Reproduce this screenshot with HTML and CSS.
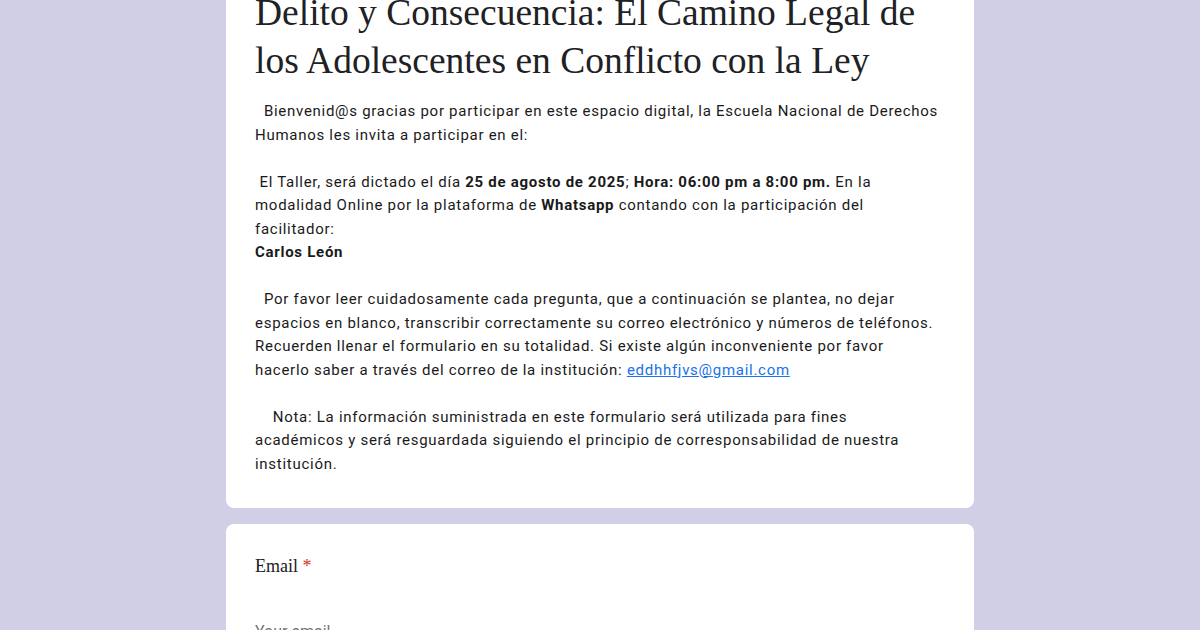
FILE: index.html
```html
<!DOCTYPE html>
<html lang="es">
<head>
<meta charset="utf-8">
<title>Delito y Consecuencia</title>
<link rel="stylesheet" href="styles.css">
</head>
<body>
<main class="page">
  <section class="card header-card">
    <h1 class="title">Delito y Consecuencia: El Camino Legal de los Adolescentes en Conflicto con la Ley</h1>
    <div class="desc">  Bienvenid@s gracias por participar en este espacio digital, la Escuela Nacional de Derechos Humanos les invita a participar en el:

 El Taller, será dictado el día <b>25 de agosto de 2025</b>; <b>Hora: 06:00 pm a 8:00 pm.</b> En la modalidad Online por la plataforma de <b>Whatsapp</b> contando con la participación del facilitador:
<b>Carlos León</b>

  Por favor leer cuidadosamente cada pregunta, que a continuación se plantea, no dejar espacios en blanco, transcribir correctamente su correo electrónico y números de teléfonos. Recuerden llenar el formulario en su totalidad. Si existe algún inconveniente por favor hacerlo saber a través del correo de la institución: <a class="link" href="#">eddhhfjvs@gmail.com</a>

    Nota: La información suministrada en este formulario será utilizada para fines<br>académicos y será resguardada siguiendo el principio de corresponsabilidad de nuestra institución.</div>
  </section>
  <section class="card question-card">
    <div class="q-title">Email <span class="req">*</span></div>
    <div class="q-input">Your email</div>
  </section>
</main>
</body>
</html>
```

FILE: styles.css
```css
html, body {
  margin: 0;
  padding: 0;
  background: #d1cfe5;
  overflow: hidden;
}
.page {
  width: 748px;
  margin: -37px auto 0;
  display: flex;
  flex-direction: column;
  gap: 16px;
}
.card {
  background: #ffffff;
  border-radius: 8px;
  padding: 0 29px 0 29px;
}
.header-card {
  padding-top: 26px;
  padding-bottom: 32px;
  padding-right: 33px;
}
.title {
  margin: 0 -4px 0 0;
  font-family: "Liberation Serif", "Times New Roman", serif;
  font-weight: 400;
  font-size: 37.5px;
  line-height: 48px;
  color: #202124;
}
.desc {
  margin-top: 15px;
  font-family: Roboto, "Liberation Sans", sans-serif;
  font-size: 15px;
  letter-spacing: 0.72px;
  line-height: 23.5px;
  color: #1a1a1a;
  white-space: pre-wrap;
}
.desc b {
  font-weight: 700;
}
.link {
  color: #1a73e8;
  text-decoration: underline;
}
.question-card {
  padding-top: 30px;
  padding-bottom: 40px;
}
.q-title {
  font-family: "Liberation Serif", "Times New Roman", serif;
  font-size: 18px;
  line-height: 24px;
  color: #202124;
}
.req {
  color: #d93025;
}
.q-input {
  margin-top: 44px;
  font-family: Roboto, "Liberation Sans", sans-serif;
  font-size: 16px;
  color: #70757a;
}
```
